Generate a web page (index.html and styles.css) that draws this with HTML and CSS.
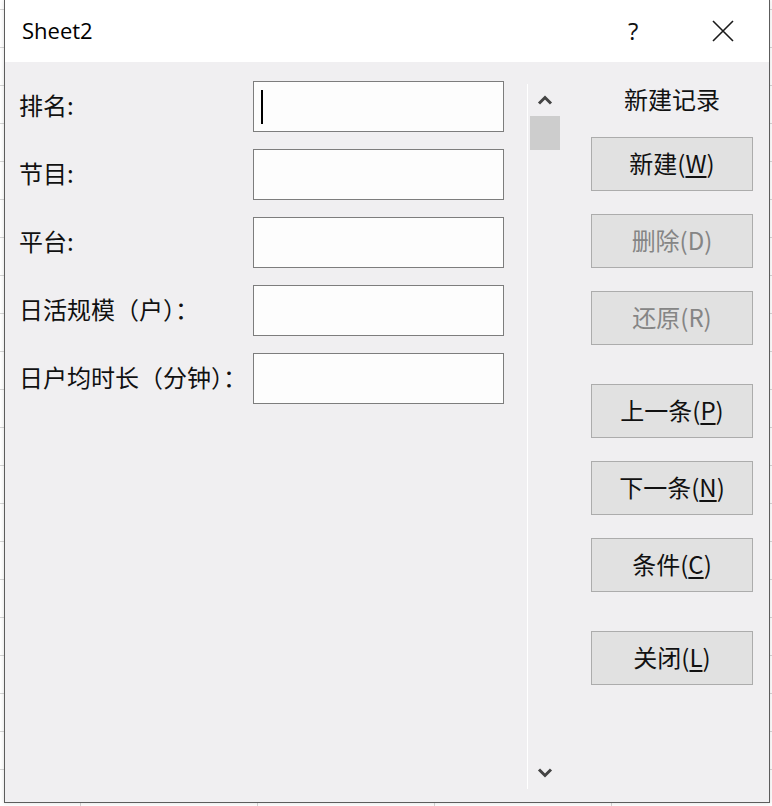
FILE: index.html
```html
<!DOCTYPE html>
<html lang="zh-CN">
<head>
<meta charset="utf-8">
<title>Sheet2</title>
<link rel="stylesheet" href="styles.css">
</head>
<body>
<div class="dialog">
  <div class="titlebar">
    <span class="title">Sheet2</span>
    <span class="help">?</span>
    <svg class="close" width="22" height="22" viewBox="0 0 22 22"><path d="M1 1 L21 21 M21 1 L1 21" stroke="#1a1a1a" stroke-width="1.6" fill="none"/></svg>
  </div>
  <div class="body">
    <div class="form">
      <div class="label">排名:</div>
      <div class="field"><span class="caret"></span></div>
      <div class="label">节目:</div>
      <div class="field"></div>
      <div class="label">平台:</div>
      <div class="field"></div>
      <div class="label">日活规模（户）：</div>
      <div class="field"></div>
      <div class="label">日户均时长（分钟）：</div>
      <div class="field"></div>
    </div>
    <div class="scroll">
      <div class="arrow"><svg width="18" height="12" viewBox="0 0 18 12"><path d="M3 9.5 L9 3.5 L15 9.5" stroke="#444" stroke-width="3" fill="none"/></svg></div>
      <div class="thumb"></div>
      <div class="track"></div>
      <div class="arrow"><svg width="18" height="12" viewBox="0 0 18 12"><path d="M3 2.5 L9 8.5 L15 2.5" stroke="#444" stroke-width="3" fill="none"/></svg></div>
    </div>
    <div class="actions">
      <div class="heading">新建记录</div>
      <div class="btn">新建(<u>W</u>)</div>
      <div class="btn disabled">删除(D)</div>
      <div class="btn disabled">还原(R)</div>
      <div class="btn sep">上一条(<u>P</u>)</div>
      <div class="btn">下一条(<u>N</u>)</div>
      <div class="btn">条件(<u>C</u>)</div>
      <div class="btn sep">关闭(<u>L</u>)</div>
    </div>
  </div>
</div>
</body>
</html>
```

FILE: styles.css
```css
html, body {
  margin: 0;
  padding: 0;
}
body {
  width: 772px;
  height: 806px;
  overflow: hidden;
  background-color: #ffffff;
  background-image:
    linear-gradient(#d6d6d6 1px, transparent 1px),
    linear-gradient(90deg, #d6d6d6 1px, transparent 1px);
  background-size: 100% 38px, 177px 100%;
  background-position: 0 9px, 80px 0;
  font-family: "Noto Sans CJK SC", "Noto Sans", sans-serif;
  color: #111;
}
.dialog {
  box-sizing: border-box;
  margin-left: 4px;
  width: 766px;
  height: 803px;
  border: 1px solid #5c5c5c;
  border-top: none;
  background: #f0eff1;
  display: flex;
  flex-direction: column;
  box-shadow: 0 0 4px rgba(0,0,0,0.15);
}
.titlebar {
  height: 62px;
  background: #ffffff;
  display: flex;
  align-items: center;
  padding-left: 17px;
  flex: none;
}
.title {
  font-family: "Open Sans", "Noto Sans", sans-serif;
  font-size: 22px;
  color: #000;
  flex: 1;
  position: relative;
  top: -1px;
}
.help {
  font-family: "Open Sans", "Noto Sans", sans-serif;
  font-size: 24px;
  color: #111;
  width: 14px;
  margin-right: 70px;
  position: relative;
  top: -1px;
}
.close {
  margin-right: 35px;
}
.body {
  flex: 1;
  display: flex;
}
.form {
  box-sizing: border-box;
  width: 522px;
  padding: 19px 0 0 14px;
  display: grid;
  grid-template-columns: 234px 251px;
  grid-auto-rows: 51px;
  row-gap: 17px;
  align-content: start;
}
.label {
  font-size: 24px;
  line-height: 30px;
  align-self: center;
  white-space: nowrap;
  color: #111;
  padding-bottom: 4px;
}
.field {
  box-sizing: border-box;
  background: #fdfdfd;
  border: 1px solid #7d7d7d;
  display: flex;
  align-items: center;
  padding-left: 7px;
}
.caret {
  width: 2px;
  height: 34px;
  background: #000;
}
.scroll {
  width: 34px;
  border-left: 1px solid #ffffff;
  margin: 22px 0 13px 0;
  display: flex;
  flex-direction: column;
  align-items: center;
}
.arrow {
  height: 32px;
  width: 34px;
  display: flex;
  align-items: center;
  justify-content: center;
}
.thumb {
  width: 30px;
  height: 34px;
  background: #cdcdcd;
}
.track {
  flex: 1;
}
.actions {
  flex: 1;
  padding: 22px 0 0 29px;
  display: flex;
  flex-direction: column;
}
.heading {
  width: 162px;
  text-align: center;
  font-size: 24px;
  line-height: 30px;
  margin-bottom: 23px;
  color: #111;
}
.btn {
  box-sizing: border-box;
  width: 162px;
  height: 54px;
  background: #e1e1e1;
  border: 1px solid #acacac;
  display: flex;
  align-items: center;
  justify-content: center;
  font-size: 24px;
  color: #111;
  padding-bottom: 4px;
}
.btn + .btn {
  margin-top: 23px;
}
.btn + .btn.sep {
  margin-top: 39px;
}
.btn.disabled {
  color: #858585;
}
.btn u {
  text-decoration-thickness: 1.5px;
  text-underline-offset: 3px;
}
```
